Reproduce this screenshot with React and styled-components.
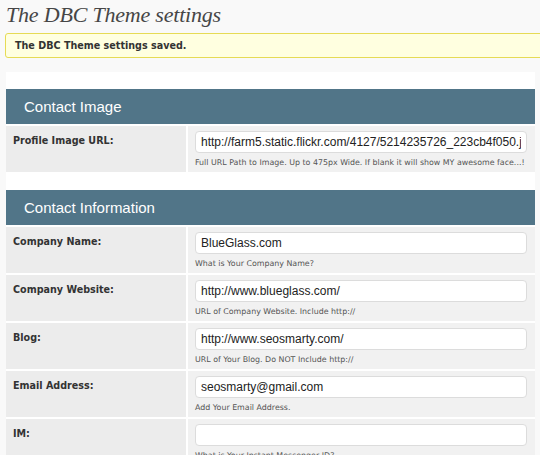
import React from 'react';
import styled, { createGlobalStyle } from 'styled-components';

const GlobalStyle = createGlobalStyle`
  html, body {
    margin: 0;
    padding: 0;
    background: #f9f9f9;
    overflow: hidden;
  }
`;

const Page = styled.div`
  width: 540px;
  height: 455px;
  overflow: hidden;
  padding: 0 5px 0 6px;
  box-sizing: border-box;
`;

const Title = styled.h2`
  margin: 0;
  padding-top: 2px;
  height: 31px;
  font-family: "Liberation Serif", serif;
  font-style: italic;
  font-weight: normal;
  font-size: 22px;
  letter-spacing: -0.2px;
  line-height: 26px;
  color: #464646;
`;

const Notice = styled.div`
  margin: 0 -20px 14px -1px;
  height: 23px;
  padding-left: 9px;
  display: flex;
  align-items: center;
  background: #ffffe0;
  border: 1px solid #e6db55;
  border-radius: 3px;
  font-family: "DejaVu Sans", sans-serif;
  font-weight: bold;
  font-size: 9.6px;
  color: #333;
`;

const Panel = styled.div`
  background: #fff;
  padding-top: 17px;
  display: flex;
  flex-direction: column;
  gap: 18px;
`;

const Section = styled.section`
  display: flex;
  flex-direction: column;
  gap: 2px;
`;

const Header = styled.h3`
  margin: 0;
  height: 35px;
  padding-left: 18px;
  display: flex;
  align-items: center;
  background: #517588;
  color: #fff;
  font-family: "Liberation Sans", sans-serif;
  font-weight: normal;
  font-size: 15px;
`;

const Row = styled.div`
  display: grid;
  grid-template-columns: 180px 1fr;
  column-gap: 2px;
  height: 46px;
`;

const Label = styled.div`
  background: #ececec;
  padding: 9px 0 0 7px;
  font-family: "DejaVu Sans", sans-serif;
  font-weight: bold;
  font-size: 9.6px;
  color: #333;
`;

const Field = styled.div`
  background: #f1f1f1;
  padding: 5px 8px 0 7px;
  display: flex;
  flex-direction: column;
`;

const Input = styled.input`
  box-sizing: border-box;
  width: 100%;
  height: 22px;
  margin: 0;
  padding: 0 5px;
  background: #fff;
  border: 1px solid #dcdcdc;
  border-radius: 4px;
  font-family: "Liberation Sans", sans-serif;
  font-size: 12px;
  color: #222;
  outline: none;
`;

const Help = styled.div`
  margin-top: 5px;
  font-family: "DejaVu Sans", sans-serif;
  font-size: 7.9px;
  color: #555;
  white-space: nowrap;
`;

const sections = [
  {
    title: 'Contact Image',
    fields: [
      {
        label: 'Profile Image URL:',
        value: 'http://farm5.static.flickr.com/4127/5214235726_223cb4f050.jpg',
        help: 'Full URL Path to Image. Up to 475px Wide. If blank it will show MY awesome face...!',
      },
    ],
  },
  {
    title: 'Contact Information',
    fields: [
      { label: 'Company Name:', value: 'BlueGlass.com', help: 'What is Your Company Name?' },
      { label: 'Company Website:', value: 'http://www.blueglass.com/', help: 'URL of Company Website. Include http://' },
      { label: 'Blog:', value: 'http://www.seosmarty.com/', help: 'URL of Your Blog. Do NOT Include http://' },
      { label: 'Email Address:', value: 'seosmarty@gmail.com', help: 'Add Your Email Address.' },
      { label: 'IM:', value: '', help: 'What is Your Instant Messenger ID?' },
    ],
  },
];

function App() {
  return (
    <>
      <GlobalStyle />
      <Page>
        <Title>The DBC Theme settings</Title>
        <Notice>The DBC Theme settings saved.</Notice>
        <Panel>
          {sections.map((s) => (
            <Section key={s.title}>
              <Header>{s.title}</Header>
              {s.fields.map((f) => (
                <Row key={f.label}>
                  <Label>{f.label}</Label>
                  <Field>
                    <Input type="text" defaultValue={f.value} readOnly />
                    <Help>{f.help}</Help>
                  </Field>
                </Row>
              ))}
            </Section>
          ))}
        </Panel>
      </Page>
    </>
  );
}

export default App;
